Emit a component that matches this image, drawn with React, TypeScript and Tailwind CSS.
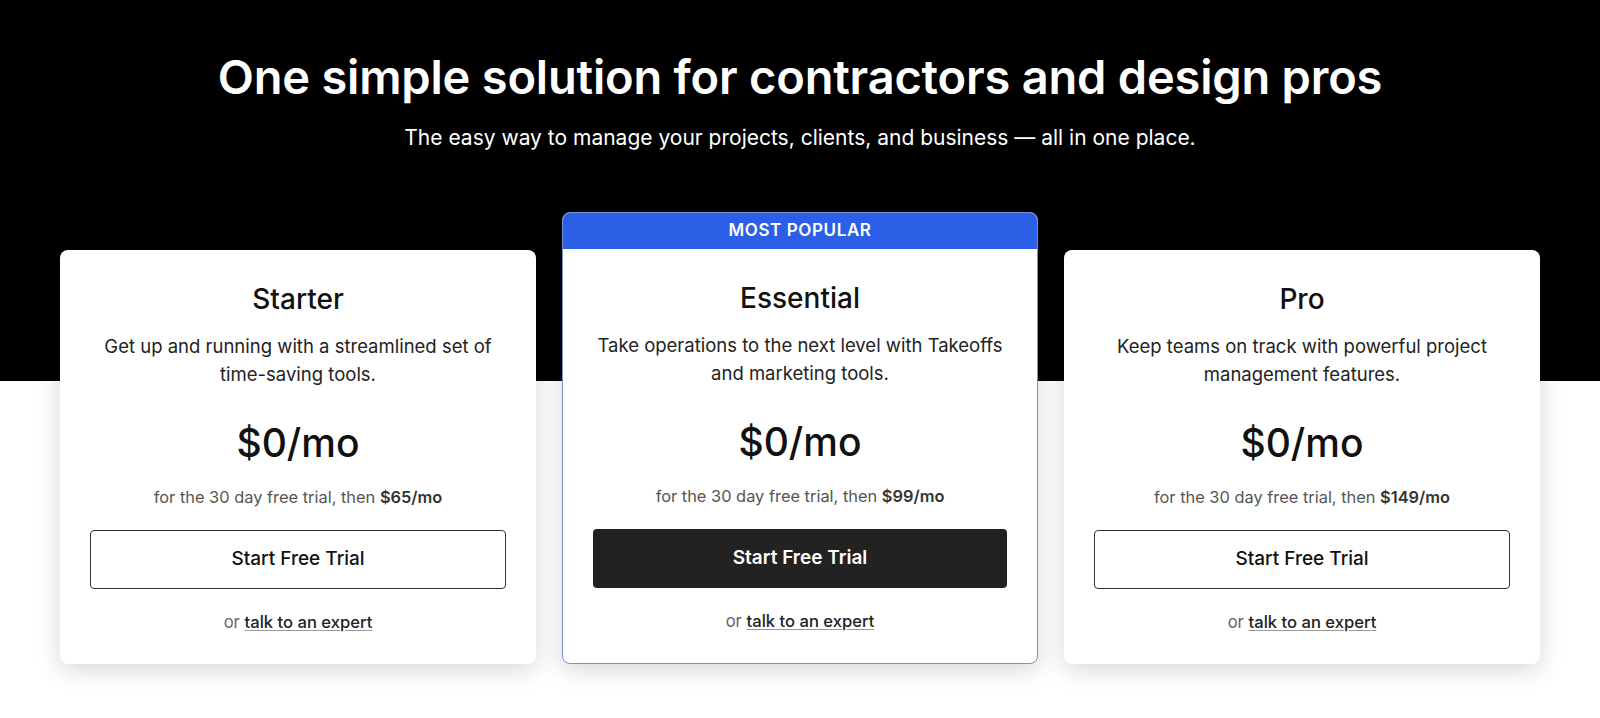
const plans = [
  {
    name: "Starter",
    text: "Get up and running with a streamlined set of time-saving tools.",
    after: "$65/mo",
    popular: false,
  },
  {
    name: "Essential",
    text: "Take operations to the next level with Takeoffs and marketing tools.",
    after: "$99/mo",
    popular: true,
  },
  {
    name: "Pro",
    text: "Keep teams on track with powerful project management features.",
    after: "$149/mo",
    popular: false,
  },
];

function PlanBody({ plan }: { plan: (typeof plans)[number] }) {
  return (
    <div className="flex flex-col items-center px-[30px] pt-[32px] pb-[31px] text-center">
      <h3 className="text-[28px] leading-[34px] font-medium text-[#111]">{plan.name}</h3>
      <p className="mt-[17px] text-[18.5px] leading-[27.5px] text-[#222] max-w-[416px]">{plan.text}</p>
      <p className="mt-[32px] text-[39px] leading-[46px] font-medium text-[#111]">$0/mo</p>
      <p className="mt-[20px] text-[16.4px] leading-[22px] text-[#555]">
        for the 30 day free trial, then <span className="font-semibold text-[#333]">{plan.after}</span>
      </p>
      <button
        className={
          plan.popular
            ? "mt-[22px] h-[59px] w-full rounded-[4px] bg-[#222] text-[19px] font-semibold text-white"
            : "mt-[22px] h-[59px] w-full rounded-[4px] border border-[#333] bg-white text-[19px] font-medium text-[#111]"
        }
      >
        Start Free Trial
      </button>
      <p className="mt-[22px] text-[16.6px] leading-[22px] text-[#666]">
        or <a className="text-[#222] font-medium underline underline-offset-2 decoration-[#999]">talk to an expert</a>
      </p>
    </div>
  );
}

export default function App() {
  return (
    <div
      className="min-h-[718px] bg-[linear-gradient(to_bottom,#000_381px,#fff_381px)] pt-[50px] px-[60px]"
      style={{ fontFamily: "Inter, 'Noto Sans', sans-serif" }}
    >
      <h1 className="text-center text-[47px] leading-[54px] font-semibold text-white tracking-[-0.2px]">
        One simple solution for contractors and design pros
      </h1>
      <p className="mt-[20px] text-center text-[21px] leading-[28px] text-white">
        The easy way to manage your projects, clients, and business — all in one place.
      </p>

      <div className="mt-[60px] grid grid-cols-3 gap-[26px] items-end">
        {plans.map((plan) =>
          plan.popular ? (
            <div
              key={plan.name}
              className="rounded-[8px] border border-[#7193d6] bg-white overflow-hidden shadow-[0_6px_24px_rgba(0,0,0,0.16)]"
            >
              <div className="h-[36px] bg-[#2b5fe6] flex items-center justify-center text-[17px] font-semibold tracking-[0.6px] text-white">
                MOST POPULAR
              </div>
              <PlanBody plan={plan} />
            </div>
          ) : (
            <div key={plan.name} className="rounded-[8px] bg-white shadow-[0_6px_24px_rgba(0,0,0,0.16)]">
              <PlanBody plan={plan} />
            </div>
          )
        )}
      </div>
    </div>
  );
}
